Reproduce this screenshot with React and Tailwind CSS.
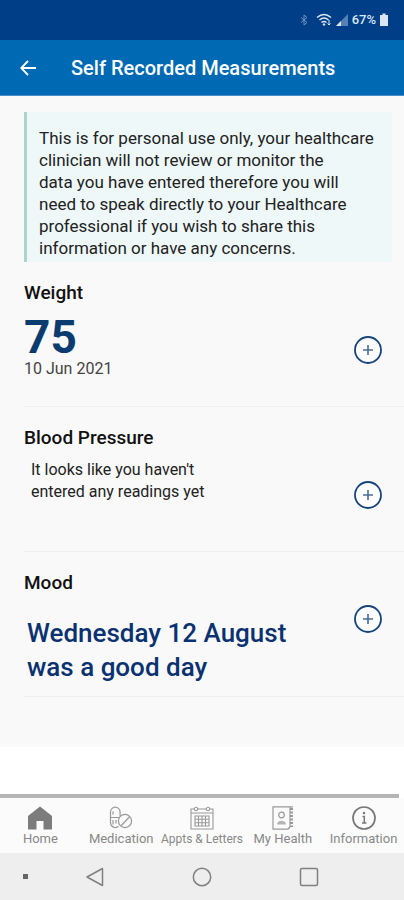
import React from "react";

function StatusBar() {
  return (
    <div className="flex h-10 items-center justify-end gap-1 bg-[#003f87] pr-4 text-[#dbe6f5]">
      <svg className="h-3 w-2 opacity-50" viewBox="0 0 8 12" fill="none" stroke="currentColor" strokeWidth="1">
        <path d="M1 3.5l6 5-3 2.5V1l3 2.5-6 5" />
      </svg>
      <svg className="ml-1 h-3.5 w-4" viewBox="0 0 16 14" fill="none" stroke="currentColor" strokeWidth="1.5">
        <path d="M1 4.500Q8-1.500 15 4.500M3.500 7Q8 3 12.500 7M5.500 9.500Q8 7.500 10.500 9.500" />
        <path d="M8 10l1.500 1.500L8 13l-1.500-1.500z" fill="currentColor" stroke="none" />
        <path d="M13 7v5M11.500 10.500L13 12l1.500-1.500" strokeWidth="1" />
      </svg>
      <svg className="h-3 w-3" viewBox="0 0 12 12" fill="currentColor">
        <path d="M12 0v12H0z" opacity=".4" />
        <path d="M5 7v5H0z" />
      </svg>
      <span className="text-[13px] leading-4 font-medium">67%</span>
      <svg className="h-3.5 w-2" viewBox="0 0 8 14" fill="currentColor">
        <path d="M2.500 0.500h3V2H8v11H0V2h2.500z" />
      </svg>
    </div>
  );
}

function AddButton({ label }) {
  return (
    <button type="button" aria-label={label} className="size-7 shrink-0 text-[#15447d]">
      <svg className="size-7" viewBox="0 0 28 28" fill="none" stroke="currentColor">
        <circle cx="14" cy="14" r="13" strokeWidth="1.800" fill="#fff" />
        <path d="M14 9v10M9 14h10" strokeWidth="1.600" stroke="#4a6c95" />
      </svg>
    </button>
  );
}

function Measurement({ title, children, buttonClass }) {
  return (
    <section className="ml-6 flex border-b border-[#eeefef] pr-[22px]">
      <div className="min-w-0 flex-1">
        <h2 className="pt-[19px] text-[19px] leading-6 font-medium text-[#111]">{title}</h2>
        {children}
      </div>
      <div className={buttonClass}>
        <AddButton label={"Add " + title} />
      </div>
    </section>
  );
}

function HomeIcon() {
  return (
    <svg className="size-6" viewBox="0 0 24 24" fill="#7c7c7c">
      <path d="M12 0.500L24 10v13.500h-8.500V15h-7v8.500H0V10z" />
    </svg>
  );
}

function PillsIcon() {
  return (
    <svg className="size-6" viewBox="0 0 24 24" fill="none" stroke="#999" strokeWidth="1.200">
      <path d="M9.500 20.300A4.800 4.800 0 0 1 1.500 17V6a4.800 4.800 0 0 1 9.600 0v4.500M1.500 11.500h9M4 14v4.500M7 14v3.500M4 5.500v3" />
      <circle cx="16" cy="15" r="6.600" />
      <path d="M12.300 19.500l8-8.500" />
    </svg>
  );
}

function CalendarIcon() {
  return (
    <svg className="size-6" viewBox="0 0 24 24" fill="none" stroke="#999" strokeWidth="1.100">
      <path d="M4.500 3H1v20h22V3h-3.500M7.500 3h9M1 7h22" />
      <circle cx="6" cy="3" r="1.700" />
      <circle cx="18" cy="3" r="1.700" />
      <path d="M5 10h14v10H5zM5 13.300h14M5 16.700h14M8.500 10v10M12 10v10M15.500 10v10" />
    </svg>
  );
}

function HealthBookIcon() {
  return (
    <svg className="size-6" viewBox="0 0 24 24" fill="none" stroke="#999" strokeWidth="1.200">
      <path d="M2 0.800h17v20l-2 2.400H2zM19 0.800h3M19 22h-2" />
      <path d="M20.500 2v19" strokeWidth="3" strokeDasharray="2 1.500" />
      <circle cx="10.500" cy="9" r="2.800" />
      <path d="M6 18.500c0-5 9-5 9 0z" fill="#b5b5b5" stroke="none" />
    </svg>
  );
}

function InfoIcon() {
  return (
    <svg className="size-6" viewBox="0 0 24 24" fill="none" stroke="#777" strokeWidth="1.700">
      <circle cx="12" cy="12" r="11" />
      <path d="M10.500 10.500h1.800v6.500M10 17h4.500" strokeWidth="1.500" />
      <circle cx="12" cy="7" r="1.200" fill="#777" stroke="none" />
    </svg>
  );
}

const tabs = [
  { label: "Home", Icon: HomeIcon, size: "text-[13px]" },
  { label: "Medication", Icon: PillsIcon, size: "text-[13px]" },
  { label: "Appts & Letters", Icon: CalendarIcon, size: "text-[12px]" },
  { label: "My Health", Icon: HealthBookIcon, size: "text-[13px]" },
  { label: "Information", Icon: InfoIcon, size: "text-[13px]" },
];

export default function App() {
  return (
    <div className="flex min-h-screen flex-col bg-white font-['Roboto',sans-serif]">
      <StatusBar />
      <header className="flex h-14 items-center border-b border-[#4c8fca] bg-[#0069b4] pl-5 text-white">
        <button type="button" aria-label="Back" className="size-4">
          <svg className="size-4" viewBox="0 0 16 16" fill="none" stroke="currentColor" strokeWidth="1.800">
            <path d="M16 8H1.500M8 1L1.200 8 8 15" />
          </svg>
        </button>
        <h1 className="ml-[35px] text-[20px] leading-6 font-medium">Self Recorded Measurements</h1>
      </header>

      <main className="bg-[#f9f9f9] pt-4 pb-[50px]">
        <p className="mr-3 ml-6 border-l-3 border-[#acd5ca] bg-[#eef8f9] pt-[15px] pr-3 pb-[3px] pl-3 text-[17px] leading-[22px] text-[#222]">
          This is for personal use only, your healthcare clinician will not review or monitor the
          <br />
          data you have entered therefore you will
          <br />
          need to speak directly to your Healthcare professional if you wish to share this information or have any
          concerns.
        </p>

        <Measurement title="Weight" buttonClass="pt-[74px]">
          <p className="pt-[9px] text-[46px] leading-[46px] font-bold text-[#0b3c6f]">75</p>
          <p className="pb-7 text-[16px] leading-[18px] text-[#444]">10 Jun 2021</p>
        </Measurement>

        <Measurement title="Blood Pressure" buttonClass="pt-[74px]">
          <p className="w-52 pt-[9px] pb-12 pl-[7px] text-[16px] leading-[22px] text-[#222]">
            It looks like you haven't entered any readings yet
          </p>
        </Measurement>

        <Measurement title="Mood" buttonClass="pt-[53px]">
          <p className="w-[280px] pt-[21px] pb-3 pl-[3px] text-[26px] leading-[34px] font-medium text-[#0b3270]">
            Wednesday 12 August was a good day
          </p>
        </Measurement>
      </main>

      <footer className="mt-auto">
        <div className="mr-[5px] h-1 bg-[#b5b5b5]" />
        <nav className="grid h-[55px] grid-cols-5 bg-[#fbfbfb]">
          {tabs.map(({ label, Icon, size }) => (
            <a key={label} href="#" className="flex min-w-0 flex-col items-center pt-2 text-[#888]">
              <Icon />
              <span className={size + " leading-[18px] whitespace-nowrap"}>{label}</span>
            </a>
          ))}
        </nav>
        <div className="flex h-[47px] items-center bg-[#eeeeee] pr-[85px] pl-[23px] text-[#808080]">
          <span className="size-[5px] bg-[#666]" />
          <div className="ml-[57px] flex flex-1 items-center justify-between">
            <button type="button" aria-label="Back" className="size-5">
              <svg className="size-5" viewBox="0 0 20 20" fill="none" stroke="currentColor" strokeWidth="1.500" strokeLinejoin="round">
                <path d="M17.500 1.500v17L2 10z" />
              </svg>
            </button>
            <button type="button" aria-label="Home" className="size-5">
              <svg className="size-5" viewBox="0 0 20 20" fill="none" stroke="currentColor" strokeWidth="1.500">
                <circle cx="10" cy="10" r="8.700" />
              </svg>
            </button>
            <button type="button" aria-label="Recent apps" className="size-5">
              <svg className="size-5" viewBox="0 0 20 20" fill="none" stroke="currentColor" strokeWidth="1.500">
                <rect x="1.500" y="1.500" width="17" height="17" rx="1.500" />
              </svg>
            </button>
          </div>
        </div>
      </footer>
    </div>
  );
}
